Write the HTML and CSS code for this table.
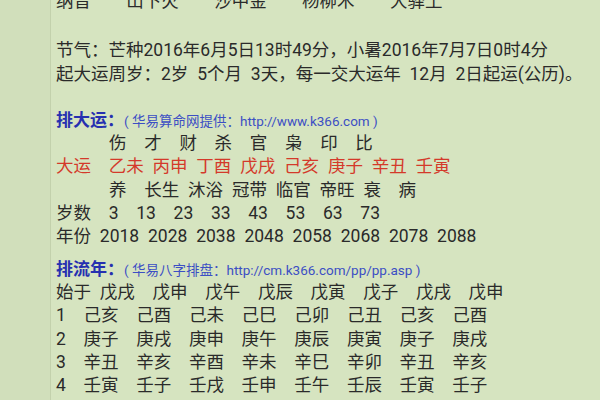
FILE: index.html
```html
<!DOCTYPE html>
<html lang="zh">
<head>
<meta charset="utf-8">
<link rel="stylesheet" href="styles.css">
</head>
<body>
<div class="page">
  <div class="gutter"></div>
  <div class="content">
    <div class="line first">纳音    山下火    沙中金    杨柳木    大驿土</div>
    <div class="line gap-top">节气：芒种2016年6月5日13时49分，小暑2016年7月7日0时4分</div>
    <div class="line">起大运周岁：2岁 5个月 3天，每一交大运年 12月 2日起运(公历)。</div>
    <div class="line heading h1"><span class="title">排大运：</span><span class="src">( 华易算命网提供：http://www.k366.com )</span></div>
    <div class="line">      伤  才  财  杀  官  枭  印  比</div>
    <div class="line red">大运  乙未 丙申 丁酉 戊戌 己亥 庚子 辛丑 壬寅</div>
    <div class="line">      养  长生 沐浴 冠带 临官 帝旺 衰  病</div>
    <div class="line">岁数  3  13  23  33  43  53  63  73</div>
    <div class="line">年份 2018 2028 2038 2048 2058 2068 2078 2088</div>
    <div class="line heading h2"><span class="title">排流年：</span><span class="src">( 华易八字排盘：http://cm.k366.com/pp/pp.asp )</span></div>
    <div class="line">始于 戊戌  戊申  戊午  戊辰  戊寅  戊子  戊戌  戊申</div>
    <div class="line">1  己亥  己酉  己未  己巳  己卯  己丑  己亥  己酉</div>
    <div class="line">2  庚子  庚戌  庚申  庚午  庚辰  庚寅  庚子  庚戌</div>
    <div class="line">3  辛丑  辛亥  辛酉  辛未  辛巳  辛卯  辛丑  辛亥</div>
    <div class="line">4  壬寅  壬子  壬戌  壬申  壬午  壬辰  壬寅  壬子</div>
  </div>
</div>
</body>
</html>
```
FILE: styles.css
```css
html, body {
  margin: 0;
  padding: 0;
  width: 600px;
  height: 400px;
  overflow: hidden;
  background: #d6e4c0;
}
.page {
  display: flex;
  height: 400px;
}
.gutter {
  width: 50px;
  flex: none;
  background: #d1dfbb;
  border-right: 1px solid #c3d1ac;
}
.content {
  flex: 1;
  padding-left: 5px;
  margin-top: -10px;
  font-family: Roboto, "Noto Sans CJK SC", sans-serif;
  font-size: 17.5px;
  color: #2a2a2a;
}
.line {
  height: 23.3px;
  line-height: 23.3px;
  white-space: pre;
  word-spacing: 4.5px;
}
.gap-top { margin-top: 26px; }
.h1 { margin-top: 23px; }
.h2 { margin-top: 9px; }
.red { color: #d4392a; }
.title {
  color: #2630b0;
  font-weight: bold;
  font-size: 17px;
}
.src {
  color: #3c4fc4;
  font-size: 13.5px;
  word-spacing: 0;
}
```
